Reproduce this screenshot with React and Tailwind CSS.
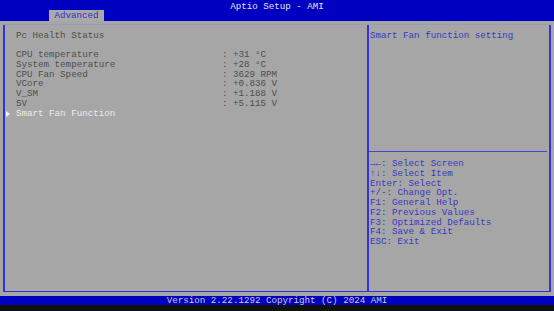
import React from "react";

const readings = [
  ["CPU temperature", ": +31 °C"],
  ["System temperature", ": +28 °C"],
  ["CPU Fan Speed", ": 3629 RPM"],
  ["VCore", ": +0.836 V"],
  ["V_SM", ": +1.188 V"],
  ["5V", ": +5.115 V"],
];

const help = [
  "→←: Select Screen",
  "↑↓: Select Item",
  "Enter: Select",
  "+/-: Change Opt.",
  "F1: General Help",
  "F2: Previous Values",
  "F3: Optimized Defaults",
  "F4: Save & Exit",
  "ESC: Exit",
];

const App = () => {
  return (
    <div
      className="w-[554px] h-[311px] flex flex-col bg-[#a6a6a6] text-[9.2px] leading-[10px] whitespace-pre overflow-hidden"
      style={{ fontFamily: '"Liberation Mono", "DejaVu Sans Mono", monospace' }}
    >
      {/* title bar */}
      <div className="h-[21px] bg-[#0000c0] flex flex-col">
        <div className="h-[10px] pt-[2px] text-center text-[#e4e4e4]">Aptio Setup - AMI</div>
        <div className="ml-[49px] w-[55px] h-[11px] bg-[#a9a9a9] text-[#2f2fc8] text-center pt-[1px]">
          Advanced
        </div>
      </div>

      {/* body */}
      <div className="flex-1 px-[2px] pt-[3px] pb-[4px] flex flex-col">
        <div className="flex-1 border-t border-[#9b9bb4] pl-px pr-[1px] flex flex-col">
          <div className="flex-1 flex border-l-2 border-r-2 border-b border-[#3333d4]">
            {/* left panel */}
            <div className="w-[362px] pt-[6px] text-[#4e4e4e] leading-[9.85px]">
              <div className="pl-[11px]">Pc Health Status</div>
              <div className="mt-[9px]">
                {readings.map(([label, value]) => (
                  <div key={label} className="flex pl-[11px]">
                    <span className="w-[206px]">{label}</span>
                    <span>{value}</span>
                  </div>
                ))}
                <div className="flex items-center text-[#ececec]">
                  <svg width="4" height="6" viewBox="0 0 4 6" className="ml-[1px] mr-[6px]">
                    <polygon points="0,0 4,3 0,6" fill="#f4f4f4" />
                  </svg>
                  <span>Smart Fan Function</span>
                </div>
              </div>
            </div>

            {/* divider */}
            <div className="w-[2px] bg-[#3333d4]" />

            {/* right panel */}
            <div className="flex-1 flex flex-col pr-[2px] text-[#3838c4]">
              <div className="h-[126px] pt-[6px] pl-px">Smart Fan function setting</div>
              <div className="h-px bg-[#4848cc]" />
              <div className="pt-[7px] pl-px leading-[9.75px]">
                {help.map((line) => (
                  <div key={line}>{line}</div>
                ))}
              </div>
            </div>
          </div>
        </div>
      </div>

      {/* footer */}
      <div className="h-[9px] bg-[#0000c0] text-center text-[#cfcfcf] leading-[9px]">
        Version 2.22.1292 Copyright (C) 2024 AMI
      </div>
      <div className="h-[6px] bg-[#101010]" />
    </div>
  );
};

export default App;
